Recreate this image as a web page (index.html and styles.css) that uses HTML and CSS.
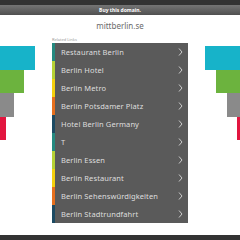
FILE: index.html
```html
<!DOCTYPE html>
<html lang="en">
<head>
  <meta charset="UTF-8">
  <meta name="viewport" content="width=device-width, initial-scale=1.0">
  <title>mittberlin.se</title>
  <link rel="stylesheet" href="styles.css">
</head>
<body>
  <div class="topbar"></div>
  <div class="buybar">Buy this domain.</div>
  <h1 class="domain">mittberlin.se</h1>
  <div class="main">
    <div class="decor left">
      <div class="bar cyan" style="width:35px"></div>
      <div class="bar green" style="width:24px"></div>
      <div class="bar gray" style="width:14px"></div>
      <div class="bar red" style="width:6px"></div>
    </div>
    <div class="links">
      <div class="links-title">Related Links</div>
      <ul class="link-list">
        <li class="teal"><a href="#">Restaurant Berlin</a><svg class="chev" viewBox="0 0 5 8"><polyline points="1,0.5 4,4 1,7.5"/></svg></li>
        <li class="lime"><a href="#">Berlin Hotel</a><svg class="chev" viewBox="0 0 5 8"><polyline points="1,0.5 4,4 1,7.5"/></svg></li>
        <li class="yellow"><a href="#">Berlin Metro</a><svg class="chev" viewBox="0 0 5 8"><polyline points="1,0.5 4,4 1,7.5"/></svg></li>
        <li class="orange"><a href="#">Berlin Potsdamer Platz</a><svg class="chev" viewBox="0 0 5 8"><polyline points="1,0.5 4,4 1,7.5"/></svg></li>
        <li class="navy"><a href="#">Hotel Berlin Germany</a><svg class="chev" viewBox="0 0 5 8"><polyline points="1,0.5 4,4 1,7.5"/></svg></li>
        <li class="teal"><a href="#">T</a><svg class="chev" viewBox="0 0 5 8"><polyline points="1,0.5 4,4 1,7.5"/></svg></li>
        <li class="lime"><a href="#">Berlin Essen</a><svg class="chev" viewBox="0 0 5 8"><polyline points="1,0.5 4,4 1,7.5"/></svg></li>
        <li class="yellow"><a href="#">Berlin Restaurant</a><svg class="chev" viewBox="0 0 5 8"><polyline points="1,0.5 4,4 1,7.5"/></svg></li>
        <li class="orange"><a href="#">Berlin Sehenswürdigkeiten</a><svg class="chev" viewBox="0 0 5 8"><polyline points="1,0.5 4,4 1,7.5"/></svg></li>
        <li class="navy"><a href="#">Berlin Stadtrundfahrt</a><svg class="chev" viewBox="0 0 5 8"><polyline points="1,0.5 4,4 1,7.5"/></svg></li>
      </ul>
    </div>
    <div class="decor right">
      <div class="bar cyan" style="width:35px"></div>
      <div class="bar green" style="width:24px"></div>
      <div class="bar gray" style="width:13px"></div>
      <div class="bar red" style="width:3px"></div>
    </div>
  </div>
  <div class="footer"></div>
</body>
</html>
```
FILE: styles.css
```css
  body {
    font-family: "Noto Sans", Arial, sans-serif;
    background-color: #fff;
    margin: 0;
    padding: 0;
    display: flex;
    flex-direction: column;
    height: 240px;
    overflow: hidden;
  }
  .topbar {
    height: 5px;
    background-color: #333;
  }
  .buybar {
    height: 10px;
    line-height: 10px;
    background: linear-gradient(#757575, #505050);
    color: #fff;
    font-size: 5px;
    font-weight: bold;
    text-align: center;
  }
  .domain {
    margin: 5px 0 0;
    height: 11px;
    line-height: 11px;
    text-align: center;
    font-size: 8px;
    font-weight: normal;
    color: #6a6a6a;
  }
  .main {
    display: flex;
    margin-top: 6px;
  }
  .decor {
    width: 52px;
    display: flex;
    flex-direction: column;
    padding-top: 9px;
  }
  .decor.left {
    align-items: flex-start;
  }
  .decor.right {
    align-items: flex-end;
  }
  .bar {
    height: 23.5px;
  }
  .cyan { background-color: #17b3c9; }
  .green { background-color: #6cb33e; }
  .gray { background-color: #8a8a8a; }
  .red { background-color: #e2163f; }
  .links {
    width: 136px;
  }
  .links-title {
    font-size: 4px;
    height: 6px;
    line-height: 6px;
    color: #999;
  }
  .link-list {
    list-style: none;
    margin: 0;
    padding: 0;
    background-color: #5a5a5a;
  }
  .link-list li {
    height: 18px;
    display: flex;
    align-items: center;
    justify-content: space-between;
    padding: 0 5px 0 6px;
    border-left: 3px solid #258a8a;
  }
  .link-list li.teal { border-left-color: #25897f; }
  .link-list li.lime { border-left-color: #b6d234; }
  .link-list li.yellow { border-left-color: #f4d00e; }
  .link-list li.orange { border-left-color: #e66f1e; }
  .link-list li.navy { border-left-color: #1c4a62; }
  .link-list a {
    color: #dedede;
    text-decoration: none;
    font-size: 7.5px;
    letter-spacing: 0.1px;
  }
  .chev {
    width: 5px;
    height: 8px;
    fill: none;
    stroke: #d8d8d8;
    stroke-width: 0.9;
  }
  .footer {
    margin-top: auto;
    height: 5px;
    background-color: #333;
  }
```
